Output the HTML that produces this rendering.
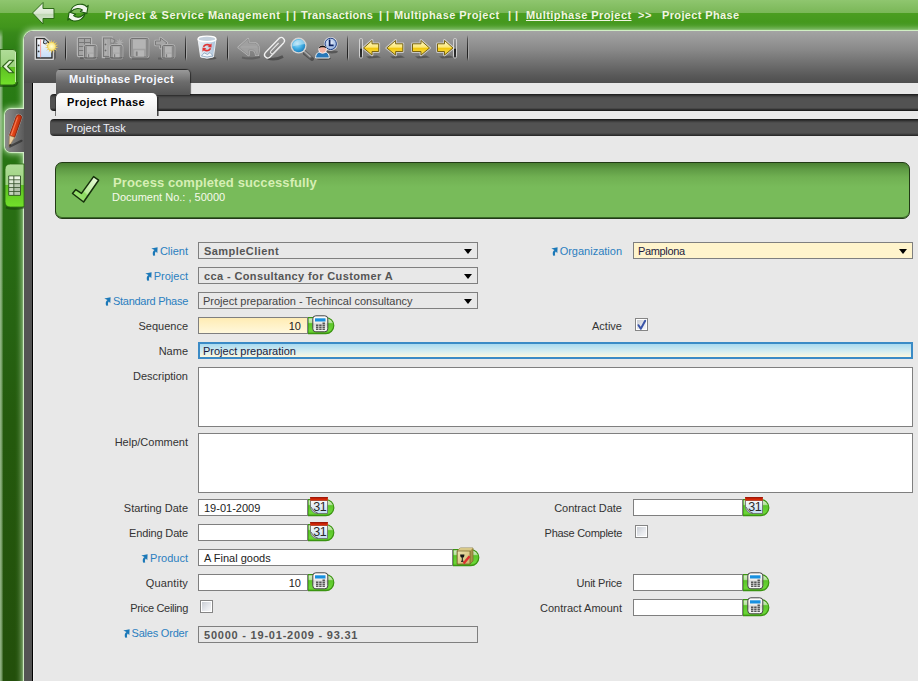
<!DOCTYPE html>
<html><head><meta charset="utf-8">
<style>
*{margin:0;padding:0;box-sizing:border-box}
html,body{width:918px;height:681px;overflow:hidden;background:#e8e8e8;font-family:"Liberation Sans",sans-serif;font-size:11px;color:#333}
.a{position:absolute}
#topbar{left:0;top:0;width:918px;height:681px;background:linear-gradient(#8fc66f 0px,#7ab757 12.9px,#4b9e20 13px,#41951c 27px,#38891a 33px,#2e8016 48px,#2b7d15 70px,#287a14 100px,#286e13 210px,#266312 330px,#245a0d 420px,#234f0b 681px)}
#leftstrip{display:none}
#leftedgeL{left:0;top:29px;width:5px;height:652px;background:linear-gradient(90deg,rgba(175,205,165,.85),rgba(175,205,165,.6) 1.5px,rgba(175,205,165,0) 3.5px);-webkit-mask-image:linear-gradient(transparent,#000 8px)}
#leftedgeR{display:none}
#frame{left:24px;top:31px;width:910px;height:670px;background:#545454;border-top-left-radius:9px;box-shadow:0 0 1px 1px rgba(220,245,210,.95),0 0 6px 1.5px rgba(200,236,188,.8)}
#ptab{left:5px;top:109px;width:24px;height:43px;background:linear-gradient(90deg,#8c8c8c,#6e6e6e 50%,#565656 85%,#545454);border-radius:6px 0 0 6px;box-shadow:0 0 1px 1px rgba(220,245,210,.95),0 0 6px 1.5px rgba(200,236,188,.8)}
#ppatch{left:24px;top:97px;width:8px;height:67px;background:#545454}
#toolbar{left:24px;top:31px;width:894px;height:52px;background:linear-gradient(#a4a4a4,#8a8a8a 18px,#5a5a5a 44px,#4e4e4e);border-top-left-radius:9px}
#content{left:32px;top:83px;width:886px;height:598px;background:#e8e8e8;border-left:1px solid #000;box-shadow:inset 1px 0 0 #f2f2f2}
.tt{top:9px;font-weight:bold;color:#f2f5e2;white-space:pre;line-height:13px}
.sep{position:absolute;top:35px;width:2px;height:26px;background:linear-gradient(90deg,#222 0,#222 1px,#a6a6a6 1px,#a6a6a6 2px);-webkit-mask-image:linear-gradient(transparent,rgba(0,0,0,.6) 4px,#000 60%,#000 85%,transparent)}
.lbl{position:absolute;text-align:right;white-space:nowrap;color:#333;font-size:11px;line-height:13px}
.lnk{color:#2b7fc0}
.fld{position:absolute;border:1px solid #7f7f7f;height:17px;background:#fff;white-space:nowrap;font-size:11px;line-height:17px;padding-left:5px;color:#222}
.sel{background:#e8e8e8;font-weight:bold;color:#555;letter-spacing:.3px}
.tri{position:absolute;right:5px;top:6px;width:0;height:0;border-left:4px solid transparent;border-right:4px solid transparent;border-top:5px solid #000}
.chk{position:absolute;width:13px;height:13px;border:1px solid #858585;background:linear-gradient(135deg,#c4c8d0,#e8eaee 60%,#fafafa);box-shadow:inset 0 0 0 1px #fff}
</style></head><body>
<!-- SYMBOLS -->
<svg width="0" height="0" style="position:absolute">
<defs>
 <linearGradient id="gPill" x1="0" y1="0" x2="0" y2="1"><stop offset="0" stop-color="#d8f0c8"/><stop offset=".3" stop-color="#b8e4a0"/><stop offset=".38" stop-color="#5cc52a"/><stop offset=".85" stop-color="#6cd838"/><stop offset="1" stop-color="#48a818"/></linearGradient>
 <linearGradient id="gCalc" x1="0" y1="0" x2="0" y2="1"><stop offset="0" stop-color="#ffffff"/><stop offset=".45" stop-color="#f0ece8"/><stop offset=".5" stop-color="#d8d8d8"/><stop offset="1" stop-color="#fafafa"/></linearGradient>
 <linearGradient id="gCalPage" x1="0" y1="0" x2="0" y2="1"><stop offset="0" stop-color="#fafafa"/><stop offset="1" stop-color="#c4dcf4"/></linearGradient>
 <linearGradient id="gChk" x1="0" y1="0" x2="1" y2="1"><stop offset="0" stop-color="#c0c4cc"/><stop offset="1" stop-color="#ffffff"/></linearGradient>
 <linearGradient id="gBox" x1="0" y1="0" x2="1" y2="1"><stop offset="0" stop-color="#f0e6b4"/><stop offset="1" stop-color="#c8b468"/></linearGradient>
 <linearGradient id="gTick" x1="1" y1="0" x2="0" y2="1"><stop offset="0" stop-color="#f0ffe4"/><stop offset=".55" stop-color="#b8ec98"/><stop offset=".6" stop-color="#8cdc60"/><stop offset="1" stop-color="#a8e880"/></linearGradient>
 <symbol id="sPill" viewBox="0 0 27 18"><path d="M0 0.6 H17.8 A8 8 0 0 1 17.8 16.6 H0 Z" fill="url(#gPill)" stroke="#3a9410" stroke-width="1.2"/></symbol>
 <symbol id="sCalc" viewBox="0 0 17 18">
  <rect x="0.8" y="0.8" width="15" height="16" rx="3" fill="url(#gCalc)" stroke="#444" stroke-width="1"/>
  <rect x="3" y="3.3" width="10.5" height="3.2" fill="#1890e0"/>
  <g fill="#333"><rect x="10.5" y="7.6" width="2.4" height="1.2"/>
  <rect x="4" y="9.6" width="2.4" height="1.2"/><rect x="7.2" y="9.6" width="2.4" height="1.2"/><rect x="10.5" y="9.6" width="2.4" height="1.2"/>
  <rect x="4" y="11.6" width="2.4" height="1.2"/><rect x="7.2" y="11.6" width="2.4" height="1.2"/><rect x="10.5" y="11.6" width="2.4" height="1.2"/>
  <rect x="4" y="13.6" width="2.4" height="1.2"/><rect x="7.2" y="13.6" width="2.4" height="1.2"/><rect x="10.5" y="13.6" width="2.4" height="1.2"/></g>
 </symbol>
 <symbol id="sCal" viewBox="0 0 19 18">
  <path d="M0.5 3.5 H17.5 V16.5 H7 Q1.5 16 0.5 10 Z" fill="url(#gCalPage)" stroke="#666" stroke-width=".8"/>
  <rect x="0.2" y="0" width="17.6" height="3.6" fill="#d82808"/>
  <rect x="0.2" y="0" width="17.6" height="1.4" fill="#a01808"/>
  <text x="3.2" y="14" font-family="Liberation Sans" font-size="12.5" fill="#2a2a2a" letter-spacing="-.5">31</text>
  <path d="M1 10 Q3 15 8 16.3" fill="none" stroke="#555" stroke-width=".8"/>
 </symbol>
 <symbol id="sBox" viewBox="0 0 18 18">
  <path d="M1.2 4 L4.2 1 H17 V14 L14 17 H1.2 Z" fill="#a89448" stroke="#7a6a28" stroke-width=".7"/>
  <path d="M1.2 4 L4.2 1 H17 L14 4 Z" fill="#d8c888"/>
  <rect x="1.2" y="4" width="12.8" height="13" fill="url(#gBox)" stroke="#6e5e22" stroke-width=".7"/>
  <path d="M4.2 7.6 H8.4 Q8.6 10.6 6.3 11.1 Q4 10.6 4.2 7.6 Z" fill="#151515"/>
  <path d="M6.3 11 V14.2 M5 14.3 H7.6" fill="none" stroke="#151515" stroke-width="1"/>
  <path d="M7.6 16.4 L13.6 9.2" stroke="#e03030" stroke-width="2.4"/>
 </symbol>
 <symbol id="sLink" viewBox="0 0 7 9">
  <path d="M0.3 1.6 L6.6 0.2 L6.3 6.2 L4.9 4.6 C3.9 5.4 3.7 6.8 4.2 8.6 L2.3 8.8 C1.2 6.6 1.7 4.2 3.5 3 Z" fill="#1a78b8"/>
 </symbol>
</defs>
</svg>

<!-- /SYMBOLS -->
<div id="topbar" class="a"></div>
<div id="leftstrip" class="a"></div>
<div id="leftedgeL" class="a"></div>
<div id="leftedgeR" class="a"></div>
<div id="frame" class="a"></div>
<div id="ptab" class="a"></div>
<div id="ppatch" class="a"></div>
<div id="toolbar" class="a"></div>
<div id="content" class="a"></div>

<!-- title -->
<div class="a tt" style="left:105px;letter-spacing:.52px">Project &amp; Service Management</div>
<div class="a tt" style="left:286px">|</div><div class="a tt" style="left:293px">|</div>
<div class="a tt" style="left:301px;letter-spacing:.36px">Transactions</div>
<div class="a tt" style="left:379px">|</div><div class="a tt" style="left:386px">|</div>
<div class="a tt" style="left:394px;letter-spacing:.43px">Multiphase Project</div>
<div class="a tt" style="left:508px">|</div><div class="a tt" style="left:515px">|</div>
<div class="a tt" style="left:526px;letter-spacing:.43px;text-decoration:underline">Multiphase Project</div>
<div class="a tt" style="left:638px;letter-spacing:.6px">&gt;&gt;</div>
<div class="a tt" style="left:662px;letter-spacing:.36px">Project Phase</div>
<!-- ICONS_TOP -->
<svg class="a" style="left:0;top:0;z-index:5" width="918" height="220" viewBox="0 0 918 220">
<defs>
 <linearGradient id="gPaper" x1="0" y1="0" x2="0" y2="1"><stop offset="0" stop-color="#ffffff"/><stop offset="1" stop-color="#c4dcf6"/></linearGradient>
 <radialGradient id="gSun" cx=".5" cy=".5" r=".5"><stop offset="0" stop-color="#fffcd8"/><stop offset=".7" stop-color="#faec90"/><stop offset="1" stop-color="#e8c850"/></radialGradient>
 <linearGradient id="gYel" x1="0" y1="0" x2="0" y2="1"><stop offset="0" stop-color="#fffad0"/><stop offset=".45" stop-color="#fbe878"/><stop offset=".55" stop-color="#f2c810"/><stop offset="1" stop-color="#f8e060"/></linearGradient>
 <linearGradient id="gBar" x1="0" y1="0" x2="0" y2="1"><stop offset="0" stop-color="#9a9a9a"/><stop offset=".5" stop-color="#7a7a7a"/><stop offset=".55" stop-color="#222"/><stop offset="1" stop-color="#333"/></linearGradient>
 <radialGradient id="gLens" cx=".4" cy=".35" r=".7"><stop offset="0" stop-color="#b8e4f8"/><stop offset=".5" stop-color="#48b4e8"/><stop offset="1" stop-color="#1a7ab8"/></radialGradient>
 <linearGradient id="gTrash" x1="0" y1="0" x2="1" y2="0"><stop offset="0" stop-color="#e8eef4"/><stop offset=".6" stop-color="#c8d8e8"/><stop offset="1" stop-color="#a8c0d8"/></linearGradient>
 <linearGradient id="gBack" x1="0" y1="0" x2="0" y2="1"><stop offset="0" stop-color="#f4f8f0"/><stop offset=".5" stop-color="#dce8d4"/><stop offset=".55" stop-color="#c0d8b4"/><stop offset="1" stop-color="#e0ecd8"/></linearGradient>
 <radialGradient id="gClock" cx=".45" cy=".4" r=".6"><stop offset="0" stop-color="#f0f4fc"/><stop offset="1" stop-color="#90b0e0"/></radialGradient>
</defs>
<!-- back arrow -->
<path d="M32.5 13 L43 2.5 L43 8.5 L54 8.5 L54 18.5 L43 18.5 L43 24 Z" fill="url(#gBack)" stroke="#2e6a18" stroke-width="1" stroke-linejoin="round"/>
<!-- refresh -->
<g fill="#f2f6ee" stroke="#1c5a0e" stroke-width="1.1" stroke-linejoin="round">
 <path d="M70.5 12 C71.5 6 77 3.5 82.5 4.4 C84.5 4.8 86 5.8 86.8 6.8 L88.2 5.4 L86.8 13.6 L80.4 11.4 L82.4 10 C81 8.8 79.5 8.4 77.5 8.5 C75 8.7 72.5 10 70.5 12 Z"/>
 <path d="M85.2 12.8 C84.2 18.8 78.7 21.6 73 20.8 C71.4 20.5 70 19.6 69.2 18.6 L67.8 20.2 L69.2 12 L75.6 14.2 L73.6 15.6 C75 16.9 76.5 17.3 78.5 17.2 C81 17 83.2 15.2 85.2 12.8 Z"/>
</g>
<!-- icon1 new doc -->
<path d="M38 59.8 H54.5 L56 58 V50 L53 50 Z" fill="#333" opacity=".45"/>
<path d="M35.3 37.3 H44.8 L53.2 45 V59.2 H35.3 Z" fill="none" stroke="#cfcfcf" stroke-width="1.5" stroke-linejoin="round"/>
<path d="M36.6 38.6 H44.3 L51.9 45.6 V57.9 H36.6 Z" fill="url(#gPaper)" stroke="#2e2e2e" stroke-width="1.2"/>
<line x1="40.6" y1="39.2" x2="40.6" y2="57.3" stroke="#f4a0a0" stroke-width="1"/>
<circle cx="38.6" cy="45.4" r=".9" fill="#333"/><circle cx="38.6" cy="51.4" r=".9" fill="#333"/>
<path d="M44.3 38.6 L47.8 41.8 L45.6 44 L43.4 43.2 Z" fill="#c0d8f2" stroke="#2e2e2e" stroke-width="1"/>
<path d="M51.60 39.40 L52.40 42.89 L54.64 40.09 L53.84 43.59 L57.07 42.04 L54.84 44.84 L58.42 44.84 L55.20 46.40 L58.42 47.96 L54.84 47.96 L57.07 50.76 L53.84 49.21 L54.64 52.71 L52.40 49.91 L51.60 53.40 L50.80 49.91 L48.56 52.71 L49.36 49.21 L46.13 50.76 L48.36 47.96 L44.78 47.96 L48.00 46.40 L44.78 44.84 L48.36 44.84 L46.13 42.04 L49.36 43.59 L48.56 40.09 L50.80 42.89 Z" fill="#f0d060" opacity=".95"/>
<circle cx="51.6" cy="46.4" r="4.3" fill="url(#gSun)"/>
<!-- disabled icons: grid+floppy -->
<rect x="78" y="38" width="13" height="18" rx="1" fill="none" stroke="#b6b6b6" stroke-width="2.4"/>
<g fill="#a4a4a4" stroke="#787878" stroke-width="1">
 <rect x="78.5" y="38.5" width="12" height="17"/>
 <path d="M78.5 42.5 H90.5 M78.5 46.5 H90.5 M78.5 50.5 H90.5 M84.5 38.5 V55.5" fill="none"/>
</g>
<rect x="84.5" y="45.5" width="11.5" height="12.5" rx="1.6" fill="none" stroke="#b8b8b8" stroke-width="2.6"/>
<rect x="84.5" y="45.5" width="11.5" height="12.5" rx="1.2" fill="#a0a0a0" stroke="#727272" stroke-width="1"/>
<rect x="87.0" y="46.5" width="6.5" height="6.2" fill="#b4b4b4"/>
<rect x="87.0" y="53.5" width="6.4" height="4.2" fill="#b6b6b6"/>
<rect x="88.0" y="54.2" width="1.2" height="3.0" fill="#7e7e7e"/>
<path d="M86.0 46.5 V57.0 M94.5 46.5 V57.0" stroke="#8a8a8a" stroke-width="1"/>
<!-- doc+floppy -->
<path d="M119.5 42.5 " />
<path d="M124.00 42.50 L121.16 43.19 L122.68 45.68 L120.19 44.16 L119.50 47.00 L118.81 44.16 L116.32 45.68 L117.84 43.19 L115.00 42.50 L117.84 41.81 L116.32 39.32 L118.81 40.84 L119.50 38.00 L120.19 40.84 L122.68 39.32 L121.16 41.81 Z" fill="#b0b0b0" opacity=".8"/>
<rect x="103" y="37.5" width="8.5" height="19.5" fill="none" stroke="#b6b6b6" stroke-width="2.4"/>
<rect x="103.5" y="38" width="7.5" height="18.5" fill="#a6a6a6" stroke="#787878" stroke-width="1"/>
<path d="M106 40 V55" stroke="#b8b8b8" stroke-width="1"/>
<path d="M104.6 44.5 H106.4 M105.5 43.6 V45.4 M104.6 50.5 H106.4 M105.5 49.6 V51.4" stroke="#6a6a6a" stroke-width=".8"/>
<path d="M111 38 L115 40 L113.5 43.5 L111 43" fill="#a8a8a8" stroke="#787878" stroke-width=".9"/>
<rect x="110.5" y="45.5" width="11.5" height="12.5" rx="1.6" fill="none" stroke="#b8b8b8" stroke-width="2.6"/>
<rect x="110.5" y="45.5" width="11.5" height="12.5" rx="1.2" fill="#a0a0a0" stroke="#727272" stroke-width="1"/>
<rect x="113.0" y="46.5" width="6.5" height="6.2" fill="#b4b4b4"/>
<rect x="113.0" y="53.5" width="6.4" height="4.2" fill="#b6b6b6"/>
<rect x="114.0" y="54.2" width="1.2" height="3.0" fill="#7e7e7e"/>
<path d="M112.0 46.5 V57.0 M120.5 46.5 V57.0" stroke="#8a8a8a" stroke-width="1"/>
<!-- floppy -->
<rect x="130.5" y="38.5" width="17.5" height="18.5" rx="1.6" fill="none" stroke="#b8b8b8" stroke-width="2.6"/>
<rect x="130.5" y="38.5" width="17.5" height="18.5" rx="1.2" fill="#a0a0a0" stroke="#727272" stroke-width="1"/>
<rect x="133.0" y="39.5" width="12.5" height="9.2" fill="#b4b4b4"/>
<rect x="134.3" y="50.3" width="9.8" height="6.3" fill="#b6b6b6"/>
<rect x="135.8" y="51.5" width="1.8" height="4.4" fill="#7e7e7e"/>
<path d="M132.0 39.5 V56.0 M146.5 39.5 V56.0" stroke="#8a8a8a" stroke-width="1"/>
<!-- arrow+floppy -->
<path d="M155.5 41 H160.5 V38 L167 43 L160.5 48 V45 H155.5 Z" fill="none" stroke="#b8b8b8" stroke-width="2.4" stroke-linejoin="round"/>
<path d="M155.5 41 H160.5 V38 L167 43 L160.5 48 V45 H155.5 Z" fill="#a6a6a6" stroke="#7a7a7a" stroke-width="1" stroke-linejoin="round"/>
<rect x="162.5" y="45.5" width="11.5" height="12.5" rx="1.6" fill="none" stroke="#b8b8b8" stroke-width="2.6"/>
<rect x="162.5" y="45.5" width="11.5" height="12.5" rx="1.2" fill="#a0a0a0" stroke="#727272" stroke-width="1"/>
<rect x="165.0" y="46.5" width="6.5" height="6.2" fill="#b4b4b4"/>
<rect x="165.0" y="53.5" width="6.4" height="4.2" fill="#b6b6b6"/>
<rect x="165.9" y="54.2" width="1.2" height="3.0" fill="#7e7e7e"/>
<path d="M164.0 46.5 V57.0 M172.5 46.5 V57.0" stroke="#8a8a8a" stroke-width="1"/>
<g fill="#333" opacity=".3"><path d="M80 57 H98 L96 59 H80 Z"/><path d="M105 57 H124 L122 59 H105 Z"/><path d="M132 57.5 H150 L148 59.5 H132 Z"/><path d="M158 57.5 H176 L174 59.5 H158 Z"/></g>
<!-- trash -->
<ellipse cx="210" cy="58.2" rx="6.5" ry="1.6" fill="#2a2a2a" opacity=".45"/>
<path d="M198 39 L200.6 57 Q207 59.6 213.4 57 L216 39 Z" fill="url(#gTrash)" stroke="#f2f4f6" stroke-width=".9"/>
<ellipse cx="207" cy="38.9" rx="9" ry="2.7" fill="#c4d0dc" stroke="#ffffff" stroke-width="1.3"/>
<g fill="#e03434">
 <path d="M202.8 46.6 C203.6 43.8 207.8 42.8 210.2 44.6 L211.6 43.4 L211.5 47.6 L207.6 47 L209 45.9 C207.1 44.9 204.8 45.6 204.3 47.2 Z"/>
 <path d="M211.2 48.6 C210.4 51.4 206.2 52.4 203.8 50.6 L202.4 51.8 L202.5 47.6 L206.4 48.2 L205 49.3 C206.9 50.3 209.2 49.6 209.7 48 Z"/>
</g>
<path d="M201.5 56 L204 52.8 L207.5 54.5 L210 52.5 L213 55.8 Q207 58 201.5 56 Z" fill="#f4f8fc" stroke="#6a88a8" stroke-width=".6"/>
<!-- undo disabled -->
<path d="M242 57.5 Q250 59.5 260 57" stroke="#333" stroke-width="2.2" opacity=".35" fill="none"/>
<path d="M238.6 47.4 L248 39 L248.6 43 L254.5 43.2 C257.5 43.5 259 46.5 258.8 49.5 L258 55 L256 55 C255.8 52 255 50 252 50 L248.8 50 L248.6 55.2 Z" fill="none" stroke="#b8b8b8" stroke-width="2.2" stroke-linejoin="round"/>
<path d="M238.6 47.4 L248 39 L248.6 43 L254.5 43.2 C257.5 43.5 259 46.5 258.8 49.5 L258 55 L256 55 C255.8 52 255 50 252 50 L248.8 50 L248.6 55.2 Z" fill="#a0a0a0" stroke="#8a8a8a" stroke-width=".8" stroke-linejoin="round"/>
<path d="M241 47 H257" stroke="#b0b0b0" stroke-width="1" opacity=".6"/>
<!-- paperclip -->
<path d="M268 58.5 Q276 60.5 283 56.5" stroke="#2a2a2a" stroke-width="2.6" opacity=".5" fill="none"/>
<path d="M283.8 42.7 L269.8 57.2 A3.2 3.2 0 0 1 265.2 52.8 L279.2 38.3 A3.2 3.2 0 0 1 283.8 42.7" fill="none" stroke="#f2f2f2" stroke-width="1.3"/>
<path d="M281.2 45.6 L273.6 53.4 A1.8 1.8 0 0 1 271 50.9 L278.6 43" fill="none" stroke="#e4e4e4" stroke-width="1.1"/>
<!-- magnifier -->
<path d="M305 53.5 L312 59" stroke="#222" stroke-width="4" stroke-linecap="round" opacity=".45"/>
<path d="M303.8 51 L310.2 56.6" stroke="#6a6a6a" stroke-width="3.6" stroke-linecap="round"/>
<path d="M303.8 51 L310.2 56.6" stroke="#a8a8a8" stroke-width="1.4" stroke-linecap="round"/>
<circle cx="298.6" cy="45.6" r="8" fill="#d4d4d4"/>
<circle cx="298.6" cy="45.6" r="6.6" fill="url(#gLens)"/>
<path d="M292.3 46.5 C293 41 297 39 302 40.2 C304 41 305 42.5 305.2 44 C301 44.5 296 45.5 292.3 46.5 Z" fill="#d0ecf8" opacity=".55"/>
<!-- clock + person -->
<ellipse cx="332" cy="51.8" rx="6" ry="1.6" fill="#222" opacity=".45"/>
<circle cx="330.7" cy="43.9" r="6.9" fill="#e4e4e8"/>
<circle cx="330.7" cy="43.9" r="5.7" fill="url(#gClock)" stroke="#1a3a80" stroke-width="1"/>
<path d="M329.6 39.6 V45.4 H333.6" stroke="#0a2060" stroke-width="1.7" fill="none"/>
<ellipse cx="323.5" cy="58.6" rx="7.5" ry="1.5" fill="#222" opacity=".45"/>
<path d="M315.6 58 C315.4 53.2 318.5 51.6 322.4 51.6 C326.3 51.6 329.4 53.2 329.2 58 Z" fill="#2878b8" stroke="#eeeeee" stroke-width="1"/>
<circle cx="322.6" cy="49.4" r="3.9" fill="#f2b4a4" stroke="#f4f4f4" stroke-width=".9"/>
<path d="M318.8 48.6 C318.8 44.6 326.4 44.6 326.4 48.6 C325.2 46.8 320 46.8 318.8 48.6 Z" fill="#111"/>
<!-- nav: first -->
<g fill="#222" opacity=".4">
 <path d="M366 56.5 L377 55.5 L381 57.5 L369 58.5 Z"/><path d="M390 56.5 L401 55.5 L405 57.5 L393 58.5 Z"/>
 <path d="M415 56.5 L426 55.5 L430 57.5 L418 58.5 Z"/><path d="M439 56.5 L450 55.5 L454 57.5 L442 58.5 Z"/>
</g>
<rect x="359.5" y="38.5" width="3" height="19.5" rx="1.2" fill="url(#gBar)" stroke="#d0d0d0" stroke-width="1"/>
<rect x="453.5" y="38.5" width="3" height="19.5" rx="1.2" fill="url(#gBar)" stroke="#d0d0d0" stroke-width="1"/>
<g id="navarrows">
<g stroke="#e6e6e6" stroke-width="2.8" stroke-linejoin="round" fill="none" opacity=".7">
 <path d="M363.5 48 L372 40.5 V43.8 H378.7 V51.5 H372 V55 Z"/>
 <path d="M386.8 48 L395.6 40.5 V43.8 H402.8 V51.5 H395.6 V55 Z"/>
 <path d="M429.5 48 L421 40.5 V43.8 H412.5 V51.5 H421 V55 Z"/>
 <path d="M453 48 L444.5 40.5 V43.8 H437.5 V51.5 H444.5 V55 Z"/>
</g>
<g stroke="#7a6410" stroke-width="1" stroke-linejoin="round" fill="url(#gYel)">
 <path d="M363.5 48 L372 40.5 V43.8 H378.7 V51.5 H372 V55 Z"/>
 <path d="M386.8 48 L395.6 40.5 V43.8 H402.8 V51.5 H395.6 V55 Z"/>
 <path d="M429.5 48 L421 40.5 V43.8 H412.5 V51.5 H421 V55 Z"/>
 <path d="M453 48 L444.5 40.5 V43.8 H437.5 V51.5 H444.5 V55 Z"/>
</g>
</g>
</svg>

<!-- /ICONS_TOP -->
<!-- ICONS_LEFT -->
<svg class="a" style="left:0;top:40px;z-index:4" width="32" height="180" viewBox="0 40 32 180" overflow="visible">
<defs>
 <linearGradient id="gTabL" x1="0" y1="0" x2="0" y2="1"><stop offset="0" stop-color="#b0dc98"/><stop offset=".49" stop-color="#9cd27e"/><stop offset=".5" stop-color="#5ebf22"/><stop offset="1" stop-color="#72e12a"/></linearGradient>
 <linearGradient id="gTabP" x1="0" y1="0" x2="1" y2="0"><stop offset="0" stop-color="#8a8a8a"/><stop offset=".5" stop-color="#6a6a6a"/><stop offset="1" stop-color="#545454"/></linearGradient>
 <linearGradient id="gPencil" x1="0" y1="0" x2="1" y2=".35"><stop offset="0" stop-color="#f87848"/><stop offset=".5" stop-color="#e84818"/><stop offset="1" stop-color="#b02808"/></linearGradient>
</defs>
<!-- collapse tab -->
<path d="M0 86 H14 Q17 85 17 82" stroke="#0e3a06" stroke-width="2.2" opacity=".55" fill="none"/>
<path d="M0 49.5 H13 Q16.5 49.5 16.5 53 V81.5 Q16.5 85 13 85 H0 Z" fill="url(#gTabL)" stroke="#2a6a12" stroke-width="1"/>
<path d="M15.5 52 V82" stroke="#d8f4c8" stroke-width="1" opacity=".7"/>
<path d="M2.6 66.5 L9.2 60.2 H13.8 L7.6 66.5 L13.8 72.8 H9.2 Z" fill="#e4f2d8" stroke="#2e6418" stroke-width="1.1" stroke-linejoin="round"/>
<!-- pencil tab (selected grey) -->
<path d="M10 146.5 L21.5 140.8" stroke="#1a1a1a" stroke-width="2.2" opacity=".55" stroke-linecap="round"/>
<path d="M16.2 116.6 A2.75 2.75 0 0 1 21.4 118.4 L14.6 137.4 L9.4 135.6 Z" fill="none" stroke="#f0e8e0" stroke-width="1.6" opacity=".5"/>
<path d="M16.2 116.6 A2.75 2.75 0 0 1 21.4 118.4 L14.6 137.4 L9.4 135.6 Z" fill="url(#gPencil)" stroke="#7a1a08" stroke-width=".8"/>
<path d="M17.5 117.5 L11.3 135" stroke="#ff9a78" stroke-width="1" opacity=".7"/>
<path d="M9.4 135.6 L14.6 137.4 L9 146.8 Z" fill="#ecd0a0" stroke="#9a7a50" stroke-width=".6"/>
<path d="M9 146.8 L9.7 144 L11.6 144.7 Z" fill="#222"/>
<!-- grid tab -->
<path d="M24 164 H10.5 Q5 164 5 169.5 V201.5 Q5 207 10.5 207 H24 Z" fill="url(#gTabL)" stroke="#2a6a12" stroke-width=".8"/>
<rect x="8.3" y="175.4" width="12.6" height="20.4" fill="#34502a" rx=".8"/>
<g fill="#eef8e6">
 <rect x="9.2" y="176.3" width="4.2" height="3.1"/><rect x="14.3" y="176.3" width="5.7" height="3.1"/>
 <rect x="9.2" y="180.2" width="4.2" height="3.1" opacity=".92"/><rect x="14.3" y="180.2" width="5.7" height="3.1" opacity=".85"/>
 <rect x="9.2" y="184.1" width="4.2" height="3.1" opacity=".85"/><rect x="14.3" y="184.1" width="5.7" height="3.1" opacity=".72"/>
 <rect x="9.2" y="188" width="4.2" height="3.1" opacity=".8"/><rect x="14.3" y="188" width="5.7" height="3.1" opacity=".68"/>
 <rect x="9.2" y="191.9" width="4.2" height="3" opacity=".8"/><rect x="14.3" y="191.9" width="5.7" height="3" opacity=".7"/>
</g>
<path d="M6 207.5 Q14 210 24 207.5" stroke="#123a08" stroke-width="2" opacity=".5" fill="none"/>
</svg>

<!-- /ICONS_LEFT -->
<!-- toolbar separators -->
<div class="sep" style="left:65px"></div>
<div class="sep" style="left:185px"></div>
<div class="sep" style="left:227px"></div>
<div class="sep" style="left:347px"></div>
<div class="sep" style="left:467px"></div>

<!-- tabs -->
<div class="a" style="left:50px;top:94px;width:868px;height:17px;background:linear-gradient(#1a1a1a,#4a4a4a 3px,#525252 5px,#525252 14px,#3a3a3a 15px,#111 17px);border-radius:4px 0 0 4px"></div>
<div class="a" style="left:56px;top:69px;width:134px;height:26px;background:linear-gradient(#2a2a2a,#2a2a2a 1px,#9a9a9a 1px,#6c6c6c 50%,#545454);border-radius:5px 5px 0 0;box-shadow:1px 0 1px rgba(20,20,20,.6)"></div>
<div class="a" style="left:69px;top:73px;font-weight:bold;color:#f6f8ff;letter-spacing:.4px;line-height:13px">Multiphase Project</div>
<div class="a" style="left:157px;top:97px;width:2px;height:19px;background:linear-gradient(90deg,#222,rgba(40,40,40,.3))"></div>
<div class="a" style="left:55px;top:97px;width:1px;height:19px;background:rgba(40,40,40,.6)"></div>
<div class="a" style="left:56px;top:93px;width:101px;height:23px;background:linear-gradient(#fff,#f6f6f6 50%,#e8e8e8);border-radius:5px 5px 0 0"></div>
<div class="a" style="left:67px;top:96px;font-weight:bold;color:#000;letter-spacing:.4px;line-height:13px">Project Phase</div>
<div class="a" style="left:50px;top:119px;width:868px;height:17px;background:linear-gradient(#111,#3a3a3a 2px,#525252 4px,#525252 14px,#333 16px,#222 17px);border-radius:4px 0 0 4px"></div>
<div class="a" style="left:66px;top:122px;color:#eef0f8;line-height:13px">Project Task</div>

<!-- message -->
<div class="a" style="left:55px;top:162px;width:855px;height:57px;border:1px solid #223a16;border-radius:7px;background:linear-gradient(#4a8032,#5e9a44 6px,#70b052 14px,#78bb5a 24px,#78bb5a);box-shadow:inset 0 -1px 0 #3a6a28"></div>
<div class="a" style="left:113px;top:175px;font-weight:bold;font-size:13px;color:#d6efb4;line-height:15px;letter-spacing:.1px">Process completed successfully</div>
<div class="a" style="left:112px;top:191px;color:#f6faea;line-height:13px">Document No.: , 50000</div>

<!-- form left labels -->
<div class="lbl lnk" style="right:730px;top:245px"><svg width="7" height="9" style="vertical-align:-1px;margin-right:2px"><use href="#sLink"/></svg>Client</div>
<div class="lbl lnk" style="right:730px;top:270px"><svg width="7" height="9" style="vertical-align:-1px;margin-right:2px"><use href="#sLink"/></svg>Project</div>
<div class="lbl lnk" style="right:730px;top:295px;letter-spacing:-0.28px"><svg width="7" height="9" style="vertical-align:-1px;margin-right:2px"><use href="#sLink"/></svg>Standard Phase</div>
<div class="lbl" style="right:730px;top:320px">Sequence</div>
<div class="lbl" style="right:730px;top:345px">Name</div>
<div class="lbl" style="right:730px;top:370px">Description</div>
<div class="lbl" style="right:730px;top:436px">Help/Comment</div>
<div class="lbl" style="right:730px;top:502px">Starting Date</div>
<div class="lbl" style="right:730px;top:527px;letter-spacing:-0.15px">Ending Date</div>
<div class="lbl lnk" style="right:730px;top:552px"><svg width="7" height="9" style="vertical-align:-1px;margin-right:2px"><use href="#sLink"/></svg>Product</div>
<div class="lbl" style="right:730px;top:577px;letter-spacing:0.15px">Quantity</div>
<div class="lbl" style="right:730px;top:602px;letter-spacing:-0.3px">Price Ceiling</div>
<div class="lbl lnk" style="right:730px;top:627px;letter-spacing:-0.2px"><svg width="7" height="9" style="vertical-align:-1px;margin-right:2px"><use href="#sLink"/></svg>Sales Order</div>

<!-- right labels -->
<div class="lbl lnk" style="right:296px;top:245px"><svg width="7" height="9" style="vertical-align:-1px;margin-right:2px"><use href="#sLink"/></svg>Organization</div>
<div class="lbl" style="right:296px;top:320px">Active</div>
<div class="lbl" style="right:296px;top:502px">Contract Date</div>
<div class="lbl" style="right:296px;top:527px;letter-spacing:-0.28px">Phase Complete</div>
<div class="lbl" style="right:296px;top:577px;letter-spacing:-0.22px">Unit Price</div>
<div class="lbl" style="right:296px;top:602px">Contract Amount</div>

<!-- fields -->
<div class="fld sel" style="left:198px;top:242px;width:280px;letter-spacing:.45px;padding-left:5px">SampleClient<span class="tri"></span></div>
<div class="fld sel" style="left:198px;top:267px;width:280px;letter-spacing:.38px;padding-left:5px">cca - Consultancy for Customer A<span class="tri"></span></div>
<div class="fld" style="left:198px;top:292px;width:280px;background:#e8e8e8;color:#444;padding-left:4px">Project preparation - Techincal consultancy<span class="tri"></span></div>
<div class="fld" style="left:633px;top:242px;width:280px;background:#fff4cc;color:#1c1c40;padding-left:4px;letter-spacing:-.35px">Pamplona<span class="tri"></span></div>
<div class="fld" style="left:198px;top:317px;width:110px;background:linear-gradient(#ffecb4,#fff8dc);text-align:right;padding-right:6px">10</div>
<svg class="a" style="left:308px;top:317px" width="27" height="18"><use href="#sPill"/></svg>
<div class="fld" style="left:198px;top:342px;width:715px;border:2px solid #3b8bc6;background:linear-gradient(#a9daf0,#d8eef0 60%,#fff8dc);line-height:15px;padding-left:3px;color:#1c1c3c">Project preparation</div>
<div class="chk" style="left:635px;top:318px"></div>
<div class="fld" style="left:198px;top:367px;width:715px;height:60px"></div>
<div class="fld" style="left:198px;top:433px;width:715px;height:60px"></div>
<div class="fld" style="left:198px;top:499px;width:110px">19-01-2009</div>
<svg class="a" style="left:308px;top:499px" width="27" height="18"><use href="#sPill"/></svg>
<div class="fld" style="left:198px;top:524px;width:110px"></div>
<svg class="a" style="left:308px;top:524px" width="27" height="18"><use href="#sPill"/></svg>
<div class="fld" style="left:198px;top:549px;width:255px">A Final goods</div>
<svg class="a" style="left:453px;top:549px" width="27" height="18"><use href="#sPill"/></svg>
<div class="fld" style="left:198px;top:574px;width:110px;text-align:right;padding-right:6px">10</div>
<svg class="a" style="left:308px;top:574px" width="27" height="18"><use href="#sPill"/></svg>
<div class="chk" style="left:200px;top:600px"></div>
<div class="fld sel" style="left:198px;top:626px;width:280px;letter-spacing:.78px">50000 - 19-01-2009 - 93.31</div>

<div class="fld" style="left:633px;top:499px;width:110px"></div>
<svg class="a" style="left:743px;top:499px" width="27" height="18"><use href="#sPill"/></svg>
<div class="chk" style="left:635px;top:525px"></div>
<div class="fld" style="left:633px;top:574px;width:110px"></div>
<svg class="a" style="left:743px;top:574px" width="27" height="18"><use href="#sPill"/></svg>
<div class="fld" style="left:633px;top:599px;width:110px"></div>
<svg class="a" style="left:743px;top:599px" width="27" height="18"><use href="#sPill"/></svg>

<!-- WIDGET_ICONS -->
<svg class="a" style="left:312px;top:315px" width="17" height="18"><use href="#sCalc"/></svg>
<svg class="a" style="left:312px;top:572px" width="17" height="18"><use href="#sCalc"/></svg>
<svg class="a" style="left:747px;top:572px" width="17" height="18"><use href="#sCalc"/></svg>
<svg class="a" style="left:747px;top:597px" width="17" height="18"><use href="#sCalc"/></svg>
<svg class="a" style="left:310px;top:497px" width="19" height="18"><use href="#sCal"/></svg>
<svg class="a" style="left:310px;top:522px" width="19" height="18"><use href="#sCal"/></svg>
<svg class="a" style="left:745px;top:497px" width="19" height="18"><use href="#sCal"/></svg>
<svg class="a" style="left:456px;top:547px" width="18" height="18"><use href="#sBox"/></svg>
<!-- /WIDGET_ICONS -->
<!-- MISC_ICONS -->
<svg class="a" style="left:68px;top:172px" width="32" height="32" viewBox="68 172 32 32"><path d="M72.5 193.5 L75.8 189.6 L81.5 193.4 L93.6 176.6 L98.6 180.2 L83.6 202 Z" fill="url(#gTick)" stroke="#16300c" stroke-width="1.5" stroke-linejoin="round"/></svg>
<svg class="a" style="left:635px;top:318px" width="13" height="13" viewBox="0 0 13 13"><path d="M3.5 7.2 L5.8 10.8 L10.2 2.8" fill="none" stroke="#3a54a8" stroke-width="2" stroke-linecap="round" stroke-linejoin="round"/></svg>
<!-- /MISC_ICONS -->
</body></html>
